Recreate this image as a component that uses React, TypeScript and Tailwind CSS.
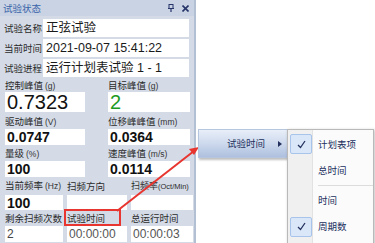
import React from "react";

const cjk = { fontFamily: '"Noto Sans CJK SC", "Noto Sans", sans-serif' };
const lat = { fontFamily: '"Liberation Sans", Arial, "Noto Sans CJK SC", sans-serif' };

function Label({ children, h }: { children: React.ReactNode; h: string }) {
  return (
    <div className={`${h} flex items-center text-[9.5px] text-[#2a2a2a] whitespace-nowrap`} style={cjk}>
      <span className="leading-[11px]">{children}</span>
    </div>
  );
}

function Unit({ children }: { children: React.ReactNode }) {
  return (
    <span className="text-[8.5px] ml-[2px] text-[#333]" style={lat}>
      {children}
    </span>
  );
}

function Box({ children, h, cls = "" }: { children?: React.ReactNode; h: string; cls?: string }) {
  return (
    <div className={`${h} bg-white flex items-center pl-[2px] overflow-hidden whitespace-nowrap leading-none ${cls}`} style={lat}>
      {children}
    </div>
  );
}

function Check() {
  return (
    <div className="w-[22px] h-[20px] bg-[#d9e7f9] border border-[#a8c4ea] rounded-[2px] flex items-center justify-center">
      <svg width="9" height="9" viewBox="0 0 9 9">
        <path d="M1 5 L3.5 7.5 L8 1" fill="none" stroke="#26325e" strokeWidth="1.3" />
      </svg>
    </div>
  );
}

export default function App() {
  return (
    <div className="relative w-[375px] h-[243px] bg-white overflow-hidden flex">
      {/* Panel */}
      <div className="w-[196px] h-full bg-[#d4dbe7] border-r-2 border-[#b3bfd2] flex flex-col">
        {/* title */}
        <div className="h-[16px] bg-[#c9d3e3] flex items-center justify-between pl-[3px] pr-[5px]">
          <span className="text-[9.5px] text-[#3a64aa] leading-[11px]" style={cjk}>试验状态</span>
          <div className="flex items-center gap-[8px]">
            <svg width="6" height="8" viewBox="0 0 6 8">
              <rect x="1" y="0.5" width="4" height="4" fill="none" stroke="#26346a" strokeWidth="1" />
              <path d="M0 4.5 H6 M3 4.5 V8" stroke="#26346a" strokeWidth="1.2" />
            </svg>
            <svg width="7" height="7" viewBox="0 0 7 7">
              <path d="M0.5 0.5 L6.5 6.5 M6.5 0.5 L0.5 6.5" stroke="#26346a" strokeWidth="1.6" />
            </svg>
          </div>
        </div>

        {/* first rows */}
        <div className="flex flex-col gap-[2px] mt-[3px] pl-[4px] pr-[5px]">
          {[
            ["试验名称", "正弦试验"],
            ["当前时间", "2021-09-07 15:41:22"],
            ["试验进程", "运行计划表试验 1 - 1"],
          ].map(([l, v]) => (
            <div key={l} className="flex items-center h-[18px]">
              <div className="w-[39px] text-[9.5px] leading-[11px] text-[#2a2a2a] whitespace-nowrap" style={cjk}>{l}</div>
              <div className="flex-1 h-[18px] bg-white flex items-center pl-[3px] text-[12.5px] leading-[15px] text-[#1a1a1a] whitespace-nowrap" style={{ fontFamily: '"Liberation Sans", "Noto Sans CJK SC", sans-serif' }}>
                {v}
              </div>
            </div>
          ))}
        </div>

        {/* two-column section */}
        <div className="grid grid-cols-[80px_82px] gap-x-[23px] pl-[5px] mt-[3px]">
          <div>
            <Label h="h-[12px]">控制峰值<Unit>(g)</Unit></Label>
            <Box h="h-[20px]" cls="text-[20px] text-[#111]">0.7323</Box>
          </div>
          <div>
            <Label h="h-[12px]">目标峰值<Unit>(g)</Unit></Label>
            <Box h="h-[20px]" cls="text-[20px] text-[#1d9a22]">2</Box>
          </div>
          <div>
            <Label h="h-[17px] pt-[2px]">驱动峰值<Unit>(V)</Unit></Label>
            <Box h="h-[16px]" cls="text-[14px] font-bold text-[#111]">0.0747</Box>
          </div>
          <div>
            <Label h="h-[17px] pt-[2px]">位移峰峰值<Unit>(mm)</Unit></Label>
            <Box h="h-[16px]" cls="text-[14px] font-bold text-[#111]">0.0364</Box>
          </div>
          <div>
            <Label h="h-[16px] pt-[2px]">量级<Unit>(%)</Unit></Label>
            <Box h="h-[16px]" cls="text-[14px] font-bold text-[#111]">100</Box>
          </div>
          <div>
            <Label h="h-[16px] pt-[2px]">速度峰值<Unit>(m/s)</Unit></Label>
            <Box h="h-[16px]" cls="text-[14px] font-bold text-[#111]">0.0114</Box>
          </div>
        </div>

        {/* three-column section */}
        <div className="grid grid-cols-[58px_60px_62px] gap-x-[4px] pl-[5px]">
          <Label h="h-[18px]">当前频率<Unit>(Hz)</Unit></Label>
          <Label h="h-[18px]">扫频方向</Label>
          <Label h="h-[18px]"><span className="text-[9px]">扫频率</span><span className="text-[7.5px]" style={lat}>(Oct/Min)</span></Label>
          <Box h="h-[15px]" cls="text-[14px] font-bold text-[#111]">100</Box>
          <Box h="h-[15px]" />
          <Box h="h-[15px]" />
          <Label h="h-[16px]">剩余扫频次数</Label>
          <Label h="h-[16px]">试验时间</Label>
          <Label h="h-[16px]">总运行时间</Label>
          <Box h="h-[16px]" cls="text-[12px] text-[#444]">2</Box>
          <Box h="h-[16px]" cls="text-[12px] text-[#555]">00:00:00</Box>
          <Box h="h-[16px]" cls="text-[12px] text-[#555]">00:00:03</Box>
        </div>
      </div>

      {/* red highlight box */}
      <div className="absolute left-[64px] top-[209px] w-[57px] h-[17px] border-2 border-[#e8352f]" />

      {/* arrow */}
      <svg className="absolute left-0 top-0" width="375" height="243" viewBox="0 0 375 243">
        <line x1="117" y1="211" x2="194" y2="151" stroke="#e8352f" strokeWidth="2" />
        <path d="M199 147 L189 149 L194 155 Z" fill="#e8352f" />
      </svg>

      {/* menu item */}
      <div className="absolute left-[198px] top-[129px] w-[90px] h-[29px] bg-gradient-to-b from-[#e9eff9] via-[#cdd9ed] to-[#aec0df] border border-[#b7c6df] shadow-[1px_2px_2px_rgba(0,0,0,0.25)] flex items-center justify-end pr-[5px]">
        <span className="text-[9.5px] text-[#22305e] mr-[13px] leading-[11px]" style={cjk}>试验时间</span>
        <svg width="4" height="6" viewBox="0 0 4 6">
          <path d="M0 0 L4 3 L0 6 Z" fill="#22305e" />
        </svg>
      </div>

      {/* submenu */}
      <div className="absolute left-[287px] top-[129px] w-[87px] h-[116px] bg-[#fbfbfb] border border-[#b9b9b9] shadow-[1px_1px_3px_rgba(0,0,0,0.25)] flex">
        <div className="w-[25px] bg-[#f0f0f0] border-r border-[#e2e2e2] flex flex-col pl-[2px]">
          <div className="h-[26px] flex items-center mt-[1px]"><Check /></div>
          <div className="h-[27px]" />
          <div className="h-[3px]" />
          <div className="h-[26px]" />
          <div className="h-[27px] flex items-center"><Check /></div>
        </div>
        <div className="flex-1 flex flex-col pl-[5px] text-[9.5px] text-[#22305e]" style={cjk}>
          <div className="h-[26px] flex items-center mt-[1px]">计划表项</div>
          <div className="h-[27px] flex items-center">总时间</div>
          <div className="h-[3px] flex items-center"><div className="w-full h-px bg-[#dcdcdc]" /></div>
          <div className="h-[26px] flex items-center">时间</div>
          <div className="h-[27px] flex items-center">周期数</div>
        </div>
      </div>
    </div>
  );
}
